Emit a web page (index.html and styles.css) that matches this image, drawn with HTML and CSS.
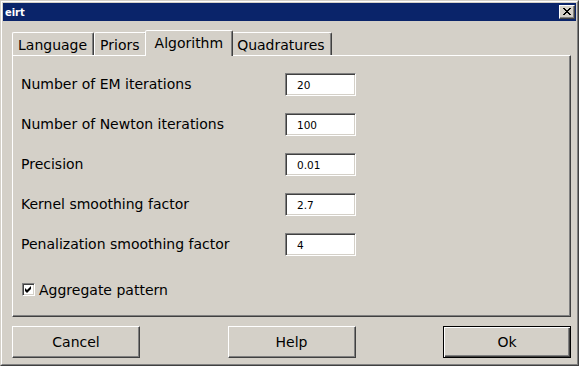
FILE: index.html
```html
<!DOCTYPE html>
<html>
<head>
<meta charset="utf-8">
<link rel="stylesheet" href="styles.css">
</head>
<body>
<div class="window">
  <div class="window-inner">
    <div class="titlebar">
      <span class="title">eirt</span>
      <div class="close-btn">
        <svg width="8" height="7" viewBox="0 0 8 7"><path d="M0 0h2v1h-2zM6 0h2v1h-2zM1 1h2v1h-2zM5 1h2v1h-2zM2 2h4v1h-4zM3 3h2v1h-2zM2 4h4v1h-4zM1 5h2v1h-2zM5 5h2v1h-2zM0 6h2v1h-2zM6 6h2v1h-2z" fill="#000"/></svg>
      </div>
    </div>
    <div class="content">
      <div class="tabs">
        <div class="tab">Language</div>
        <div class="tab">Priors</div>
        <div class="tab selected">Algorithm</div>
        <div class="tab">Quadratures</div>
      </div>
      <div class="panel">
        <div class="form">
          <div class="row"><span class="label">Number of EM iterations</span><div class="field">20</div></div>
          <div class="row"><span class="label">Number of Newton iterations</span><div class="field">100</div></div>
          <div class="row"><span class="label">Precision</span><div class="field">0.01</div></div>
          <div class="row"><span class="label">Kernel smoothing factor</span><div class="field">2.7</div></div>
          <div class="row"><span class="label">Penalization smoothing factor</span><div class="field">4</div></div>
        </div>
        <div class="check-row">
          <div class="checkbox">
            <svg width="7" height="7" viewBox="0 0 7 7"><path d="M6 0v3l-4 4l-2-2v-3l2 2z" fill="#000"/></svg>
          </div>
          <span class="check-label">Aggregate pattern</span>
        </div>
      </div>
      <div class="buttons">
        <div class="btn">Cancel</div>
        <div class="btn">Help</div>
        <div class="btn default">Ok</div>
      </div>
    </div>
  </div>
</div>
</body>
</html>
```
FILE: styles.css
```css
html, body {
  margin: 0;
  padding: 0;
  background: #d4d0c8;
}
body {
  font-family: "DejaVu Sans", sans-serif;
  font-size: 14px;
  color: #000;
}
.window {
  width: 579px;
  height: 366px;
  box-sizing: border-box;
  border: 1px solid;
  border-color: #d4d0c8 #404040 #404040 #d4d0c8;
  background: #d4d0c8;
}
.window-inner {
  height: 100%;
  box-sizing: border-box;
  border: 1px solid;
  border-color: #fff #808080 #808080 #fff;
  padding: 1px;
  display: flex;
  flex-direction: column;
}
.titlebar {
  height: 18px;
  flex: none;
  background: #0a246a;
  display: flex;
  align-items: center;
  justify-content: space-between;
  padding: 0 1px 0 2px;
}
.title {
  color: #fff;
  font-family: "DejaVu Sans Condensed", "DejaVu Sans", sans-serif;
  font-weight: bold;
  font-size: 11px;
}
.close-btn {
  width: 16px;
  height: 14px;
  box-sizing: border-box;
  border: 1px solid;
  border-color: #fff #404040 #404040 #fff;
  box-shadow: inset -1px -1px #808080;
  background: #d4d0c8;
  display: flex;
  align-items: center;
  justify-content: center;
  padding: 0 1px 1px 0;
}
.close-btn svg { display: block; }
.content {
  flex: 1;
  display: flex;
  flex-direction: column;
  padding: 9px 5px 5px 9px;
}
.tabs {
  display: flex;
  align-items: flex-end;
  height: 25px;
  flex: none;
}
.tab {
  height: 23px;
  box-sizing: border-box;
  padding: 1px 6px 0 5px;
  border: 1px solid;
  border-bottom: none;
  border-color: #fff #404040 transparent #fff;
  border-radius: 2px 2px 0 0;
  box-shadow: inset -1px 0 #808080;
  display: flex;
  align-items: center;
  line-height: 1;
}
.tab.selected {
  height: 26px;
  margin: 0 -2px -1px;
  padding: 0 9px 2px;
  position: relative;
  z-index: 1;
  background: #d4d0c8;
}
.panel {
  height: 262px;
  box-sizing: border-box;
  border: 1px solid;
  border-color: #fff #404040 #404040 #fff;
  box-shadow: inset -1px -1px #808080;
  padding: 17px 8px 0 8px;
  flex: none;
}
.form {
  display: flex;
  flex-direction: column;
  gap: 17px;
}
.row {
  display: grid;
  grid-template-columns: 264px 71px;
  align-items: center;
  height: 23px;
}
.label {
  line-height: 1;
  padding-bottom: 2px;
}
.field {
  height: 23px;
  box-sizing: border-box;
  border: 1px solid;
  border-color: #808080 #fff #fff #808080;
  box-shadow: inset 1px 1px #404040, inset -1px -1px #d4d0c8;
  background: #fff;
  font-size: 10.5px;
  padding: 5px 0 0 11px;
  line-height: 13px;
}
.check-row {
  display: flex;
  align-items: center;
  margin-top: 22px;
  height: 23px;
  padding-left: 1px;
}
.checkbox {
  width: 13px;
  height: 13px;
  box-sizing: border-box;
  border: 1px solid;
  border-color: #808080 #fff #fff #808080;
  box-shadow: inset 1px 1px #404040, inset -1px -1px #d4d0c8;
  background: #fff;
  display: flex;
  align-items: center;
  justify-content: center;
}
.checkbox svg { display: block; }
.check-label {
  margin-left: 4px;
  line-height: 1;
}
.buttons {
  display: flex;
  justify-content: space-between;
  margin-top: 9px;
}
.btn {
  width: 128px;
  height: 32px;
  box-sizing: border-box;
  border: 1px solid;
  border-color: #fff #404040 #404040 #fff;
  box-shadow: inset -1px -1px #808080;
  display: flex;
  align-items: center;
  justify-content: center;
  line-height: 1;
}
.btn.default {
  border-color: #000;
  box-shadow: inset 1px 1px #fff, inset -1px -1px #404040, inset -2px -2px #808080;
}
```
